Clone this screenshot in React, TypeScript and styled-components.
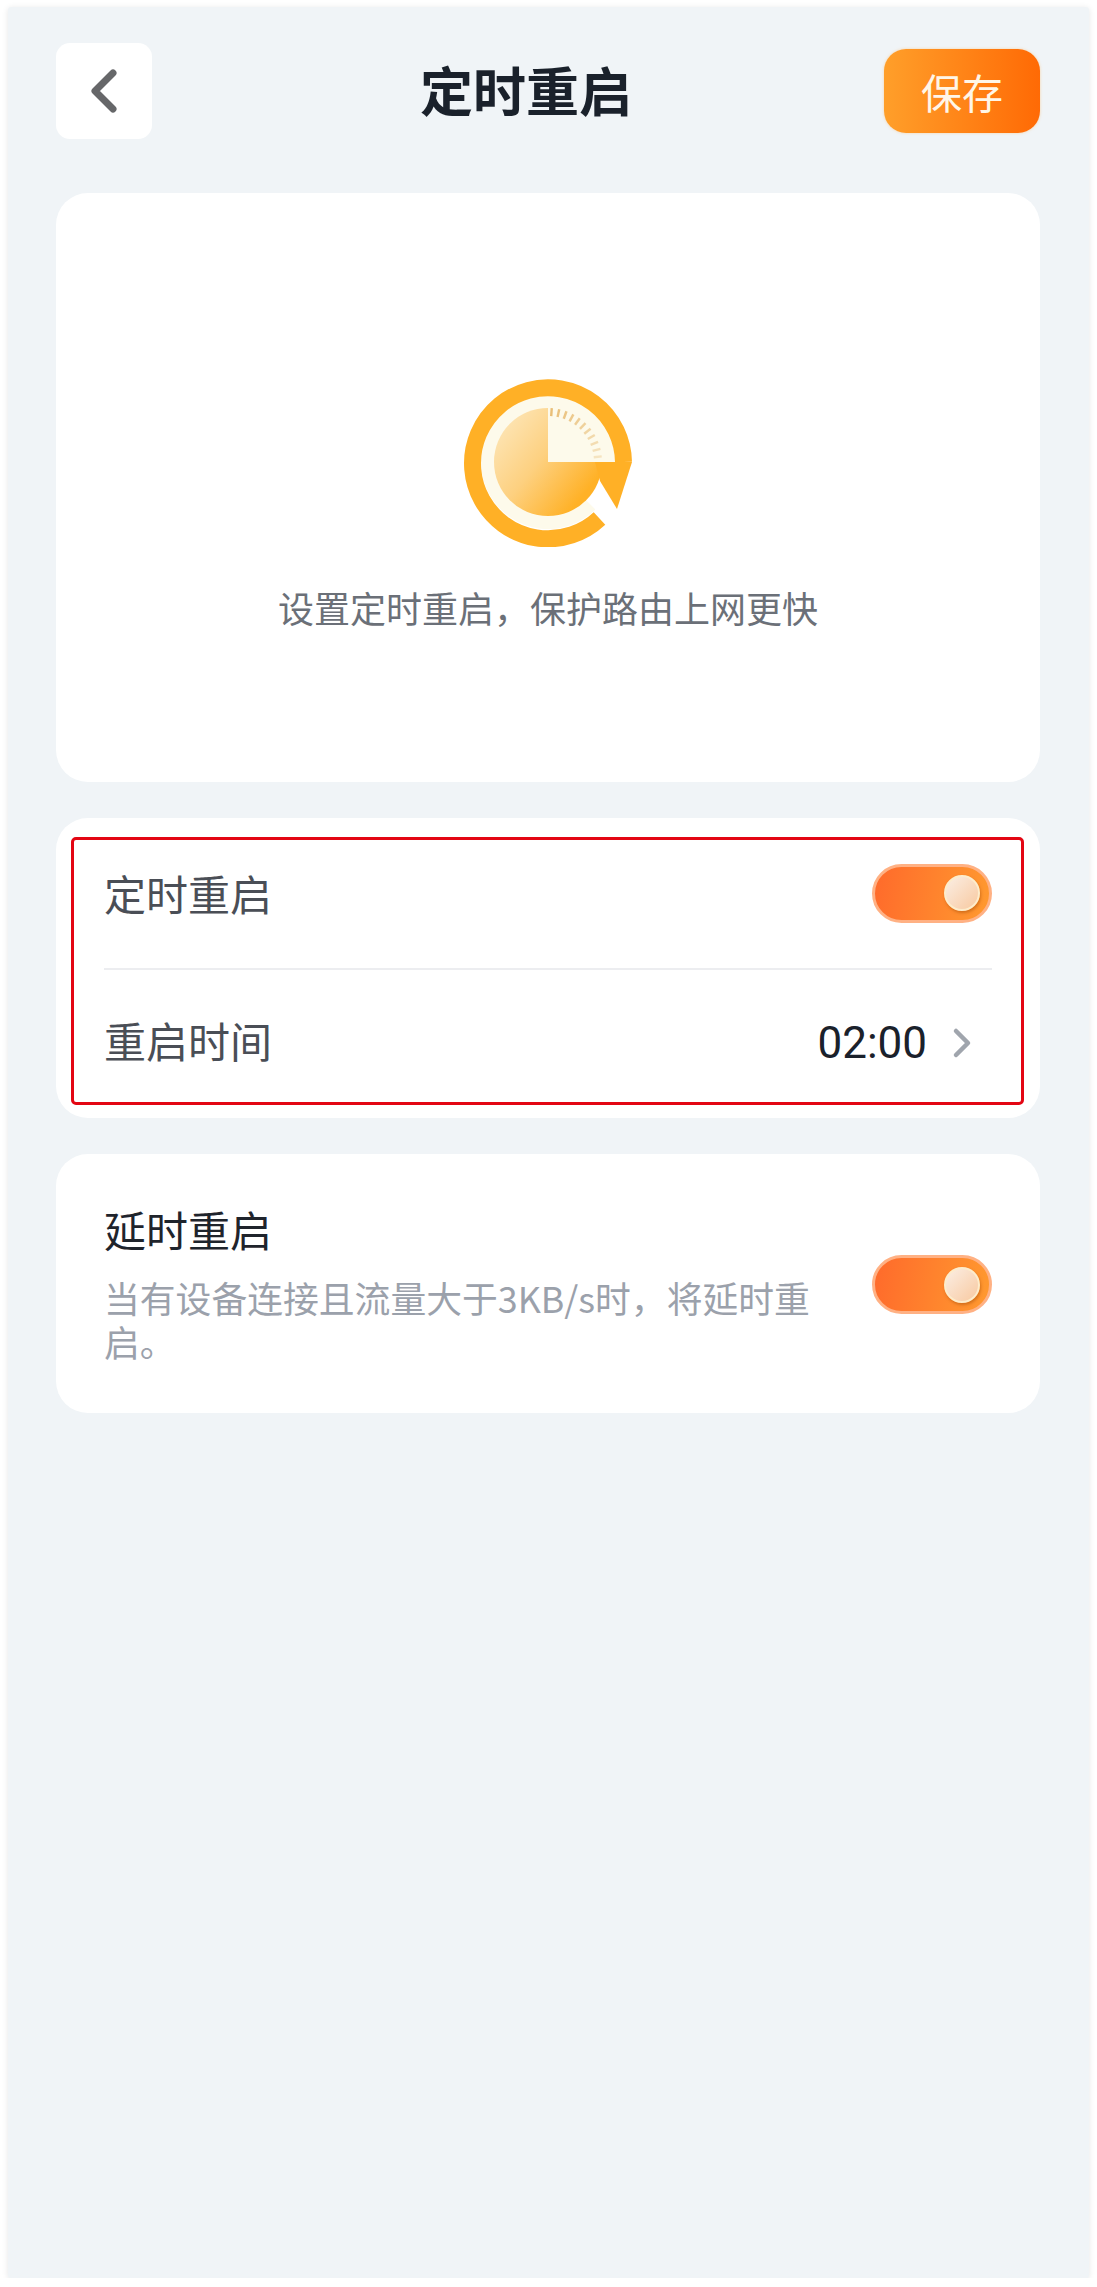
import React from "react";
import styled, { createGlobalStyle } from "styled-components";

const GlobalStyle = createGlobalStyle`
  html, body {
    margin: 0;
    padding: 0;
    background: #fff;
    font-family: "Noto Sans CJK SC", "Noto Sans", sans-serif;
  }
`;

const Page = styled.div`
  box-sizing: border-box;
  margin: 7px 8px 0;
  width: 1081px;
  height: 2271px;
  padding: 36px 49px 0 48px;
  background: #f0f4f7;
  border-radius: 3px;
  box-shadow: 0 1px 6px rgba(0, 0, 0, 0.1);
  display: flex;
  flex-direction: column;
`;

const Header = styled.header`
  display: flex;
  align-items: center;
  justify-content: space-between;
  height: 96px;
  margin-bottom: 54px;
`;

const BackButton = styled.button`
  width: 96px;
  height: 96px;
  padding: 0;
  border: 0;
  border-radius: 14px;
  background: #fff;
  display: flex;
  align-items: center;
  justify-content: center;
`;

const Title = styled.h1`
  margin: -4px 0 0 16px;
  font-size: 53px;
  line-height: 1;
  font-weight: 700;
  color: #1a212b;
`;

const SaveButton = styled.button`
  width: 156px;
  height: 84px;
  padding: 0;
  border: 0;
  border-radius: 22px;
  background: linear-gradient(90deg, #ff9f2a, #ff6a05);
  box-shadow: 0 0 3px rgba(255, 190, 110, 0.6);
  color: #fff6e8;
  font-family: inherit;
  font-size: 41px;
  line-height: 1;
`;

const Card = styled.section`
  position: relative;
  background: #fff;
  border-radius: 32px;
`;

const HeroCard = styled(Card)`
  height: 589px;
  margin-bottom: 36px;
  display: flex;
  flex-direction: column;
  align-items: center;
  padding-top: 184px;
  box-sizing: border-box;
`;

const HeroIcon = styled.svg`
  display: block;
  width: 170px;
  height: 170px;
`;

const HeroText = styled.p`
  margin: 35px 0 0;
  font-size: 36px;
  line-height: 50px;
  color: #6b7078;
`;

const SettingsCard = styled(Card)`
  height: 300px;
  margin-bottom: 36px;
  padding: 20px 48px 0;
  box-sizing: border-box;
`;

const Highlight = styled.div`
  position: absolute;
  left: 15px;
  right: 16px;
  top: 19px;
  bottom: 13px;
  border: 3px solid #e30613;
  border-radius: 5px;
`;

const Row = styled.div`
  box-sizing: border-box;
  height: 130px;
  padding-bottom: 20px;
  display: flex;
  align-items: center;
  justify-content: space-between;
  & + & {
    border-top: 2px solid #ecedf0;
    height: 142px;
    padding-bottom: 0;
  }
`;

const Label = styled.span<{ $dark?: boolean }>`
  font-size: 42px;
  line-height: 56px;
  color: ${(p) => (p.$dark ? "#1f242c" : "#4a4e56")};
`;

const Toggle = styled.div`
  box-sizing: border-box;
  width: 120px;
  height: 59px;
  flex: none;
  padding-right: 9px;
  border-radius: 30px;
  border: 3px solid #ffb184;
  background: linear-gradient(100deg, #ff6a2b, #ff9a2f);
  display: flex;
  align-items: center;
  justify-content: flex-end;
`;

const Knob = styled.div`
  box-sizing: border-box;
  width: 36px;
  height: 36px;
  border-radius: 50%;
  border: 2px solid #fdeccb;
  background: linear-gradient(135deg, #fbeee4, #f8c9a0);
  box-shadow: 1px 2px 3px rgba(170, 80, 10, 0.5);
`;

const TimeValue = styled.div`
  display: flex;
  align-items: center;
  gap: 25px;
  padding: 6px 20px 0 0;
  font-family: "Roboto", "Noto Sans", sans-serif;
  font-size: 44px;
  color: #1a212b;
`;

const DelayCard = styled(Card)`
  height: 259px;
  padding: 47px 48px 0;
  box-sizing: border-box;
  display: flex;
  justify-content: space-between;
  gap: 50px;
`;

const DelayText = styled.div`
  flex: 1;
`;

const Description = styled.p`
  margin: 18px 0 0;
  font-size: 35.8px;
  line-height: 44px;
  color: #9ba1ab;
`;

const DelayToggle = styled(Toggle)`
  margin-top: 54px;
`;

const ticks = Array.from({ length: 11 }, (_, i) => 4 + i * 8);

function ClockIcon() {
  return (
    <HeroIcon viewBox="33 18 170 170">
      <defs>
        <linearGradient id="disc" x1="0" y1="0.1" x2="1" y2="0.9">
          <stop offset="0" stopColor="#fde8bd" />
          <stop offset="0.45" stopColor="#fdd07f" />
          <stop offset="0.85" stopColor="#ffb126" />
        </linearGradient>
      </defs>
      <path d="M118 103 L185 103 A67 67 0 1 0 165.4 150.4 Z" fill="#fdfaeb" />
      <circle cx="118" cy="103" r="54" fill="url(#disc)" />
      <path d="M118 103 V36 A67 67 0 0 1 185 103 Z" fill="#fdfaeb" />
      {ticks.map((a) => {
        const r = (a * Math.PI) / 180;
        return (
          <line
            key={a}
            x1={118 + 46 * Math.sin(r)}
            y1={103 - 46 * Math.cos(r)}
            x2={118 + 54 * Math.sin(r)}
            y2={103 - 54 * Math.cos(r)}
            stroke="#e9bd74"
            strokeWidth="2.4"
            opacity={1 - a / 130}
          />
        );
      })}
      <path
        d="M169.5 159.5 A75.5 75.5 0 1 1 193.5 103"
        fill="none"
        stroke="#ffb026"
        strokeWidth="17"
      />
      <path d="M165 103 L202 103 L187 150 L170 122 Z" fill="#ffb026" />
    </HeroIcon>
  );
}

export default function App() {
  return (
    <>
      <GlobalStyle />
      <Page>
        <Header>
          <BackButton aria-label="返回">
            <svg width="30" height="46" viewBox="0 0 30 46" fill="none">
              <path d="M24 5 L6 23 L24 41" stroke="#666769" strokeWidth="7" strokeLinecap="round" strokeLinejoin="round" />
            </svg>
          </BackButton>
          <Title>定时重启</Title>
          <SaveButton>保存</SaveButton>
        </Header>

        <HeroCard>
          <ClockIcon />
          <HeroText>设置定时重启，保护路由上网更快</HeroText>
        </HeroCard>

        <SettingsCard>
          <Row>
            <Label>定时重启</Label>
            <Toggle>
              <Knob />
            </Toggle>
          </Row>
          <Row>
            <Label>重启时间</Label>
            <TimeValue>
              02:00
              <svg width="20" height="32" viewBox="0 0 20 32" fill="none">
                <path d="M4 4 L16 16 L4 28" stroke="#a0a5ad" strokeWidth="4.5" strokeLinecap="round" strokeLinejoin="round" />
              </svg>
            </TimeValue>
          </Row>
          <Highlight />
        </SettingsCard>

        <DelayCard>
          <DelayText>
            <Label $dark>延时重启</Label>
            <Description>当有设备连接且流量大于3KB/s时，将延时重启。</Description>
          </DelayText>
          <DelayToggle>
            <Knob />
          </DelayToggle>
        </DelayCard>
      </Page>
    </>
  );
}
